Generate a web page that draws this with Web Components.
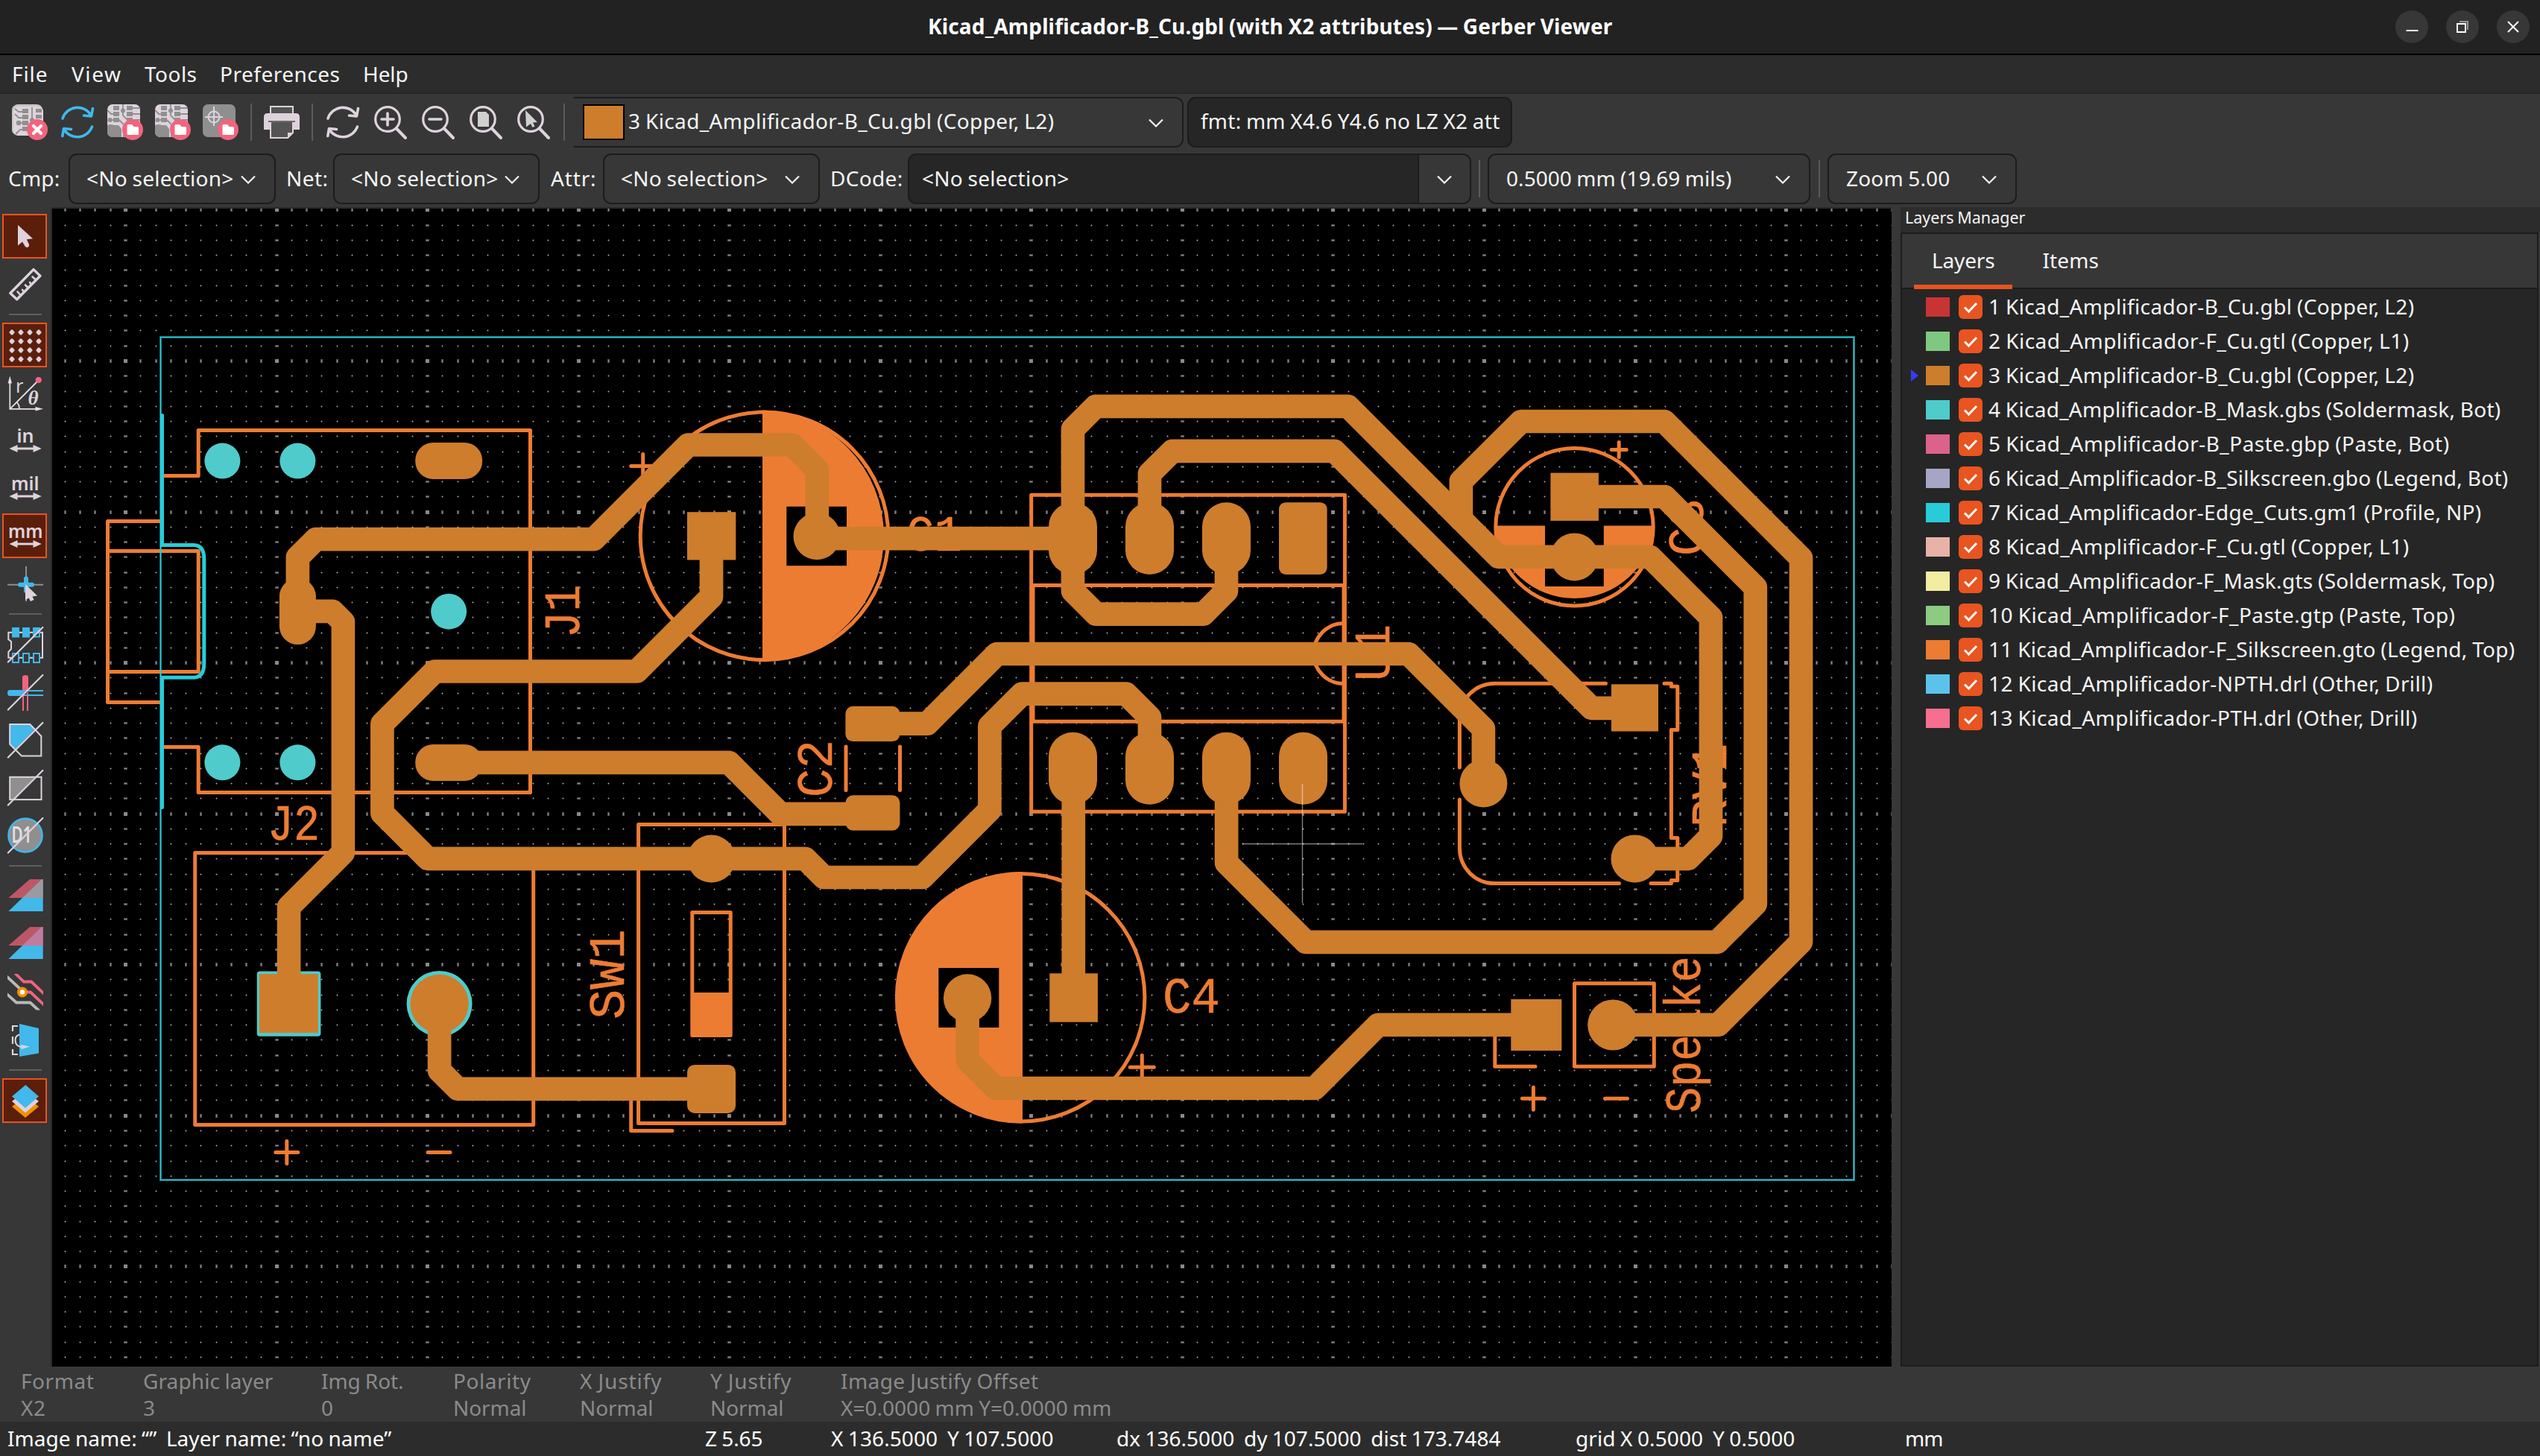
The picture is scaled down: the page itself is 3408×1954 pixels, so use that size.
<!DOCTYPE html>
<html lang="en">
<head>
<meta charset="utf-8">
<title>Gerber Viewer</title>
<style>
  html, body { margin: 0; padding: 0; background: #373737; }
  body { width: 3408px; height: 1954px; overflow: hidden; }
</style>
</head>
<body>
<gerber-app></gerber-app>
<script>
const FG = '#ded3dd', BLUE = '#42b8eb', PINK = '#f2647e', GREY = '#8f8f8f', ORANGE = '#f29100';

/* ---------- icon artwork, all on a 48 x 48 grid ---------- */
const refresh = c => `<g fill="none" stroke="${c}" stroke-width="3.6" stroke-linecap="round" stroke-linejoin="round">
  <path d="M4 19 A21 21 0 0 1 42 14.5"/><path d="M44.5 5.5 L42.5 16 L32.5 15"/>
  <path d="M43.5 30 A21 21 0 0 1 6 34"/><path d="M3.8 42.5 L5.5 32.5 L15.5 33.5"/></g>`;
const badge = inner => `<circle cx="34" cy="34" r="14" fill="${PINK}"/>${inner}`;
const folder = `<path d="M26.5 28.5 q0 -1.5 1.5 -1.5 h5 l2.5 3 h5 q1.5 0 1.5 1.5 v8 q0 1.5 -1.5 1.5 h-12.500 q-1.500 0 -1.500 -1.500z" fill="#fff"/>`;
const pcb = `<clipPath id="pc"><rect width="44" height="44" rx="7"/></clipPath><g clip-path="url(#pc)">
  <rect width="44" height="44" fill="${FG}"/>
  <g fill="${GREY}"><rect x="8" y="2" width="8" height="6"/><rect x="8" y="10" width="8" height="6"/><circle cx="3.500" cy="21" r="3"/><rect x="8" y="18" width="8" height="6"/>
  <rect x="26" y="2" width="8" height="6"/><rect x="26" y="10" width="8" height="6"/><rect x="26" y="18" width="8" height="6"/><circle cx="21" cy="8.500" r="3"/>
  <path d="M0 28 q5 -2 9 0 h6 l4 5 v12 h-19z"/></g>
  <g fill="none" stroke="${GREY}" stroke-width="1.800"><path d="M0 8 l5 5 h4"/><path d="M3 21 h6"/><path d="M21 0 v15 l5 5"/><path d="M34 5 h12 M34 13 h12 M34 21 h12"/><path d="M16 21 l6 6 v18"/></g></g>`;
const zoomGlass = inner => `<g fill="none" stroke="${FG}" stroke-linecap="round"><circle cx="20" cy="20" r="16.300" stroke-width="3.200"/><path d="M32 32.500 L44 45" stroke-width="4"/></g>${inner}`;
const diag = `<path d="M0.800 47.500 L47.300 1" stroke="${FG}" stroke-width="2.200" stroke-linecap="round"/>`;
const dimArrow = `<path d="M12 35 H36" stroke="${FG}" stroke-width="3"/><path d="M2.500 35 L13.500 30 V40Z M45.800 35 L34.500 30 V40Z" fill="${FG}"/>`;
const unit = (t, x, w) => `<text x="${x}" y="27" textLength="${w}" lengthAdjust="spacingAndGlyphs" font-family="'Noto Sans','Open Sans',sans-serif" font-weight="600" font-size="25" fill="${FG}">${t}</text>${dimArrow}`;

const ICONS = {
  clear: `<path d="M3 3 q1 -3 5 -3 h25 q7 0 8 7 v30 h-38z" fill="#c9c6c3"/><path d="M0 8 q0 -7 7 -7 v40 q-7 -1 -7 -7z" fill="#c9c6c3"/>
    <rect x="2" y="3" width="40" height="39" rx="6" fill="${FG}"/>
    <g fill="${GREY}"><rect x="14" y="6" width="8" height="6"/><rect x="14" y="14" width="8" height="6"/><circle cx="9" cy="25" r="3.300"/><rect x="14" y="22" width="8" height="6"/><rect x="14" y="30" width="9" height="6"/>
    <rect x="32" y="6" width="8" height="5"/><rect x="32" y="14" width="8" height="5"/><circle cx="27" cy="21" r="3"/></g>
    <g fill="none" stroke="${GREY}" stroke-width="1.800"><path d="M4 6 l5 4 h6"/><path d="M4 13 l5 5 h6"/><path d="M9 25 h6"/><path d="M5 40 l6 -6 h4"/><path d="M27 4 v20"/></g>
    ${badge(`<path d="M29 29 L39 39 M39 29 L29 39" stroke="#fff" stroke-width="4.200" stroke-linecap="round"/>`)}`,
  reload: refresh(BLUE),
  redraw: refresh(FG),
  gerber: pcb + badge(folder),
  drill: `<rect width="44" height="44" rx="7" fill="${GREY}"/><g fill="none" stroke="${FG}" stroke-width="2"><circle cx="15" cy="17" r="7.500"/><path d="M15 3 V29 M3 17 H27"/></g>${badge(folder)}`,
  print: `<rect x="9" y="3" width="30" height="12" fill="#545454" stroke="${FG}" stroke-width="2"/>
    <path d="M0 17 q0 -5 5 -5 h38 q5 0 5 5 v17 h-48z" fill="${FG}"/><rect x="6" y="22" width="36" height="2" fill="#6b6b6b"/>
    <path d="M9 24 H39 V40 L33 45 H9Z" fill="#545454"/><path d="M9 24 V45 H32 L39 38 V24" fill="none" stroke="${FG}" stroke-width="2"/><path d="M32 46 V38 H40Z" fill="${FG}"/>`,
  zin: zoomGlass(`<path d="M12 20 H28 M20 12 V28" stroke="${FG}" stroke-width="3.600" stroke-linecap="round"/>`),
  zout: zoomGlass(`<path d="M12 20 H28" stroke="${FG}" stroke-width="3.600" stroke-linecap="round"/>`),
  zfit: zoomGlass(`<path d="M13 10 H24 L28 14 V30 H13Z" fill="#d0d0d0"/>`),
  zsel: zoomGlass(`<path d="M13 8 L29 24 L23 24.500 L25.500 29.500 L22.500 31 L20 26 L14 30.500Z" fill="#d0d0d0"/>`),
  cursor: `<path d="M14 9 L34 27.300 L25.800 28.300 L29 35 Q29.500 38.500 26.500 39 Q24.300 39.200 23.300 37 L20 31.500 L14 36.500Z" fill="${FG}"/>`,
  ruler: `<path d="M3.800 36.500 L35 4.600 L43.900 13.300 L12.700 44.800Z" fill="none" stroke="${FG}" stroke-width="3.400" stroke-linejoin="round"/><path d="M17.500 39 L13.500 34.500 M22 34.500 L20 32 M27.500 29 L24 25.500 M32 24.500 L30 22 M38 18.500 L33.500 14.500" stroke="${FG}" stroke-width="2.600" stroke-linecap="round"/>`,
  grid: [7, 19, 31, 43].map(y => [6, 18, 30, 42].map(x => `<path d="M${x - 3.800} ${y} L${x - 1} ${y - 3.600} H${x + 1} L${x + 3.800} ${y} L${x + 1} ${y + 3.600} H${x - 1}Z" fill="${FG}"/>`).join('')).join(''),
  polar: `<g fill="none" stroke="#e6dfe5" stroke-width="1.800"><path d="M3.300 8 V45.800 H42"/><path d="M3.300 45.800 L41 8"/><path d="M13 37 Q16 41 16 45"/></g>
    <path d="M3.300 1.500 L6 11.500 H0.600Z M48 45.800 L37.500 43 V48.600Z" fill="#e6dfe5"/><circle cx="41.700" cy="7" r="4.100" fill="${PINK}"/>
    <text x="11" y="23.500" font-family="'Noto Sans','Open Sans',sans-serif" font-size="25" fill="${FG}">r</text>
    <text x="27.500" y="40.300" font-family="'Liberation Serif','Noto Sans',serif" font-style="italic" font-weight="700" font-size="27" fill="${FG}">θ</text>`,
  inch: unit('in', 12.500, 23), mil: unit('mil', 5, 37.500), mm: unit('mm', 1, 46.500),
  origin: `<path d="M0 25.700 H48 M25 1 V48" stroke="${GREY}" stroke-width="2"/><path d="M17 25.700 H33 M25 17.500 V34" stroke="${BLUE}" stroke-width="6" stroke-linecap="round"/>
    <path d="M24 25 L40 40.500 L33.500 41.500 L35.500 46 L31 48 L28.500 43.500 L24 46.500Z" fill="${FG}"/>`,
  pads: `<path d="M1.300 7.800 H47 V41.700 H1.300 V34 L5 30 V20 L1.300 17Z" fill="none" stroke="${FG}" stroke-width="2"/>
    <g fill="${BLUE}"><rect x="6" y="1" width="10" height="13.500"/><rect x="20" y="1" width="10" height="13.500"/><path d="M34 1 H44 V4.500 L34 14Z"/></g>
    <g fill="#373737" stroke="${BLUE}" stroke-width="2"><rect x="7" y="36" width="8" height="12"/><rect x="21" y="36" width="8" height="12"/><rect x="35" y="36" width="8" height="12"/></g><path d="M35 13.500 H43 V5" fill="none" stroke="${BLUE}" stroke-width="2"/>${diag}`,
  lines: `<path d="M20 28 V4 q0 -3 4 -3 q4 0 4 3 V21 L20 29Z" fill="${PINK}"/><path d="M21 24 V49 M27 24 V49" stroke="${PINK}" stroke-width="2"/>
    <path d="M24 21 H3 q-3 0 -3 4 q0 4 3 4 H18Z" fill="${BLUE}"/><path d="M22 22 H48 M22 28 H48" stroke="${BLUE}" stroke-width="2"/>${diag}`,
  poly: `<path d="M2.700 2.800 H30.300 L37.500 9 L10 37 L2.700 29.800Z" fill="${BLUE}"/><path d="M3.200 3 H30.300 L45.300 19 V45.500 H19 L3.200 29.800Z" fill="none" stroke="${FG}" stroke-width="2"/>${diag}`,
  neg: `<path d="M3.500 9.500 H37 L8 40 H3.500Z" fill="${GREY}"/><rect x="3.200" y="9.800" width="42.300" height="30.300" fill="none" stroke="${FG}" stroke-width="2"/>${diag}`,
  dcode: `<circle cx="24" cy="24" r="22.500" fill="${GREY}" stroke="${BLUE}" stroke-width="2.600"/><text x="5.500" y="33.500" textLength="27" lengthAdjust="spacingAndGlyphs" font-family="'Noto Sans','Open Sans',sans-serif" font-weight="600" font-size="31" fill="#e3dfe2">D1</text>${diag}`,
  diff: `<path d="M1.300 26 L30 1 H47.700 V26Z" fill="#bd5767"/><path d="M20 26 L46 1 H47.700 V26Z" fill="#999ba0"/><path d="M1.300 44 L20 26 H47.700 V44Z" fill="${BLUE}"/>`,
  xor: `<path d="M1.300 26 L30 1 H47.700 V26Z" fill="#bd5767"/><path d="M20 26 L46 1 H47.700 V26Z" fill="#c07c9f"/><path d="M1.300 44 L20 26 H47.700 V44Z" fill="${BLUE}"/>`,
  tracks: `<clipPath id="tc"><rect width="48" height="48.500"/></clipPath><g clip-path="url(#tc)" fill="none" stroke-width="3.800"><path d="M-2 2.500 L18 21" stroke="#b9b9b9"/><path d="M-2 26 L12 38.500 H30.500 L43 50" stroke="#b9b9b9"/>
    <path d="M10 -1 L22 10.500 H32 L50 27.500" stroke="${PINK}"/><path d="M24 24.500 H31 L50 42.500" stroke="${PINK}"/></g><circle cx="20" cy="24.500" r="7" fill="${ORANGE}"/><circle cx="20" cy="24.500" r="3.200" fill="#fff"/>`,
  flip: `<path d="M16 3 L42 9 V42.500 L16 47Z" fill="${BLUE}"/><path d="M14 6 H7 V13 M7 20 V30 M7 37 V44 H14" fill="none" stroke="${FG}" stroke-width="2.200"/>
    <path d="M16 17.500 Q10.500 19 10.500 25 Q10.500 33 19 34" fill="none" stroke="${FG}" stroke-width="2"/><path d="M18.500 31 L30 33.500 L18.500 37.300Z" fill="${FG}"/>`,
  layers: `<path d="M6 32 L24.300 18 L42 32 L24 47Z" fill="${ORANGE}"/><path d="M6 25 L24.300 11 L42 25 L24 40.500Z" fill="${FG}"/><path d="M6 18.400 L24.300 2.900 L42 18.400 L24 34Z" fill="${BLUE}"/>`
};

class Base extends HTMLElement {
  constructor() { super(); this.attachShadow({ mode: 'open' }); }
  connectedCallback() {
    this.shadowRoot.innerHTML = `<style>*{box-sizing:border-box}${this.css()}</style>${this.html()}`;
    if (this.after) this.after();
  }
  css() { return ''; }
  html() { return '<slot></slot>'; }
  a(n, d = '') { return this.getAttribute(n) ?? d; }
}

/* A single line of text tracked to occupy exactly `w` pixels. */
customElements.define('ui-text', class extends Base {
  css() { return `:host{display:block;flex:none;white-space:pre;width:${this.a('w')}px;line-height:1.2}span{display:inline-block;margin-left:1px;word-spacing:-1px}`; }
  html() { return `<span>${this.a('t').replace(/</g, '&lt;')}</span>`; }
  after() {
    const s = this.shadowRoot.querySelector('span');
    const n = [...this.a('t')].length;
    s.style.letterSpacing = ((+this.a('w') - 1.5 - s.getBoundingClientRect().width) / n).toFixed(3) + 'px';
  }
});
const T = (t, w, gap = 0) => `<ui-text t="${t.replace(/"/g, '&quot;')}" w="${w}" style="margin-left:${gap}px"></ui-text>`;

customElements.define('ui-icon', class extends Base {
  css() { return ':host{display:block;flex:none;width:48px;height:48px}svg{display:block;overflow:visible}'; }
  html() { return `<svg width="48" height="48" viewBox="0 0 48 48">${ICONS[this.a('name')]}</svg>`; }
});
customElements.define('ui-sep', class extends Base {
  css() { return ':host{display:block;flex:none;width:2px;height:50px;background:#5b5b5b}'; }
});
customElements.define('ui-combo', class extends Base {
  css() {
    return `:host{display:flex;flex:none;align-items:center;height:68px;width:${this.a('w')}px;border:2px solid #1c1c1c;border-radius:11px;background:#373737;overflow:hidden}
    :host([entry]),:host([field]){background:#262626}
    :host([open]){border-left-color:transparent;border-radius:4px 11px 11px 4px}
    .mid{flex:1 1 0;min-width:0;display:flex;align-items:center;height:100%}
    .arrow{width:70px;height:100%;display:flex;align-items:center;justify-content:center;flex:none;padding-top:1px}
    :host([entry]) .arrow{background:#373737;border-left:2px solid #1c1c1c}
    :host([field]) .arrow{display:none}svg{display:block}`;
  }
  html() { return `<div class="mid"><slot></slot></div><div class="arrow"><svg width="24" height="14" viewBox="0 0 24 14"><path d="M3 2.500 L12 11.500 L21 2.500" fill="none" stroke="#f2f2f2" stroke-width="2.200"/></svg></div>`; }
});
customElements.define('tool-button', class extends Base {
  css() {
    return `:host{display:flex;flex:none;width:60px;height:60px;align-items:center;justify-content:center;padding-left:2px;border:2px solid transparent}
    :host([on]){background:#5b1e0b;border-color:#e95420}`;
  }
  html() { return `<ui-icon name="${this.a('icon')}"></ui-icon>`; }
});

customElements.define('title-bar', class extends Base {
  css() {
    return `:host{display:flex;height:74px;background:#222;border-bottom:2px solid #000;align-items:center;color:#fff;font-weight:700}
    .side{flex:1;display:flex;justify-content:flex-end;gap:24px;padding-right:14px}
    i{display:block;width:44px;height:44px;border-radius:50%;background:#373737}`;
  }
  html() {
    const b = d => `<i><svg width="44" height="44" viewBox="0 0 44 44" fill="none" stroke="#fff" stroke-width="2">${d}</svg></i>`;
    return `<div class="side"></div>${T('Kicad_Amplificador-B_Cu.gbl (with X2 attributes) — Gerber Viewer', 920)}<div class="side">
      ${b('<path d="M14.500 27 H30.500"/>')}${b('<path d="M18 15 H29 V26" stroke="#999"/><rect x="15" y="18" width="11" height="11"/>')}${b('<path d="M15 15 L29 29 M29 15 L15 29"/>')}</div>`;
  }
});
customElements.define('menu-bar', class extends Base {
  css() { return ':host{display:flex;height:52px;background:#2c2c2c;border-bottom:2px solid #272727;align-items:center;padding:2px 0 0 15px;box-sizing:border-box}'; }
  html() { return T('File', 50) + T('View', 69, 30) + T('Tools', 72, 29) + T('Preferences', 163, 29) + T('Help', 62, 29); }
});
customElements.define('main-toolbar', class extends Base {
  css() {
    return `:host{display:flex;height:76px;padding:4px 0 4px 16px;align-items:center;box-sizing:border-box}
    .g{display:flex;gap:16px}.sw{width:56px;height:48px;background:#ce7d2c;border:2px solid #000;flex:none;margin-left:12px}
    ui-text{padding-bottom:2px}`;
  }
  html() {
    const g = a => `<div class="g">${a.map(n => `<ui-icon name="${n}"></ui-icon>`).join('')}</div>`;
    const sep = (l, r) => `<ui-sep style="margin:0 ${r}px 0 ${l}px"></ui-sep>`;
    return g(['clear', 'reload', 'gerber', 'gerber', 'drill']) + sep(16, 16) + g(['print']) + sep(16, 16) +
      g(['redraw', 'zin', 'zout', 'zfit', 'zsel']) + sep(16, 10) +
      `<ui-combo w="820" open><div class="sw"></div>${T('3 Kicad_Amplificador-B_Cu.gbl (Copper, L2)', 573, 4)}</ui-combo>
       <ui-combo w="436" field style="margin-left:5px">${T('fmt: mm X4.6 Y4.6 no LZ X2 att', 403, 15)}</ui-combo>`;
  }
});
customElements.define('filter-toolbar', class extends Base {
  css() { return ':host{display:flex;height:76px;padding:0 0 0 10px;align-items:center;box-sizing:border-box}'; }
  html() {
    const c = (w, t, tw, g = 13, x = 21, extra = '') => `<ui-combo w="${w}" ${extra} style="margin-left:${g}px">${T(t, tw, x)}</ui-combo>`;
    const l = (t, w, g) => `<div class="l">${T(t, w, g)}</div>`;
    const N = '<No selection>';
    return l('Cmp:', 71, 0) + c(278, N, 199, 11) + l('Net:', 58, 13) + c(277, N, 199, 6) + l('Attr:', 63, 14) + c(291, N, 199, 8) +
      l('DCode:', 99, 13) + c(756, N, 199, 6, 16, 'entry') + `<ui-sep style="margin:0 10px 0 10px"></ui-sep>` +
      c(433, '0.5000 mm (19.69 mils)', 304, 0, 22) + `<ui-sep style="margin:0 10px 0 11px"></ui-sep>` + c(254, 'Zoom 5.00', 141, 0, 22);
  }
});
customElements.define('side-toolbar', class extends Base {
  css() { return ':host{display:flex;flex-direction:column;gap:4px;width:68px;flex:none;padding:9px 0 0 3px;box-sizing:border-box}hr{margin:6px 0 6px 9px;border:0;width:44px;height:2px;background:#5f5f5f;flex:none}'; }
  html() {
    return ['cursor*', 'ruler', '-', 'grid*', 'polar', 'inch', 'mil', 'mm*', 'origin', '-', 'pads', 'lines', 'poly', 'neg', 'dcode', '-', 'diff', 'xor', 'tracks', 'flip', '-', 'layers*']
      .map(n => n === '-' ? '<hr>' : `<tool-button icon="${n.replace('*', '')}" ${n.endsWith('*') ? 'on' : ''}></tool-button>`).join('');
  }
});

/* Board drawing; coordinates are window pixels, offset by the view box. */
customElements.define('board-canvas', class extends Base {
  css() { return ':host{display:block;flex:none;width:2470px;height:1556px;border:2px solid #2a2a2a;border-width:2px 0 0 2px;background:#000;box-sizing:border-box}svg{display:block}'; }
  grid() {
    let dim = '', core = '', bold = '';
    const P = 20.255;
    for (let j = -10; j < 68; j++) for (let i = -5; i < 118; i++) {
      const x = Math.round(168 + i * P), y = Math.round(484 + j * P);
      const bx = i % 10 === 0, by = j % 10 === 0;
      if (bx && by) bold += `M${x - 2} ${y - 2}h5v5h-5z`;
      else if (bx) { bold += `M${x - 1} ${y}h3v1h-3z`; dim += `M${x - 2} ${y - 1}h5v3h-5z`; }
      else if (by) { bold += `M${x} ${y - 1}h1v3h-1z`; dim += `M${x - 1} ${y - 2}h3v5h-3z`; }
      else { dim += `M${x} ${y - 1}h1v3h-1zM${x - 1} ${y}h3v1h-3z`; core += `M${x} ${y}h1v1h-1z`; }
    }
    return `<g shape-rendering="crispEdges"><path d="${dim}" fill="#525252"/><path d="${core}" fill="#a8a8a8"/><path d="${bold}" fill="#8a8a8a"/></g>`;
  }
  html() {
    const txt = (t, x, y, len, rot) => `<text transform="translate(${x} ${y})${rot ? ' rotate(-90)' : ''}" textLength="${len}" lengthAdjust="spacingAndGlyphs">${t}</text>`;
    const plus = (x, y, h) => `M${x - h} ${y}H${x + h}M${x} ${y - h}V${y + h}`;
    const oval = (x, y, w, h, r) => `<rect x="${x}" y="${y}" width="${w}" height="${h}" rx="${r}"/>`;
    const dot = (x, y, r) => `<circle cx="${x}" cy="${y}" r="${r}"/>`;
    return `<svg width="2468" height="1554" viewBox="70 280 2468 1554">${this.grid()}
    <g fill="none" stroke="#ed7c33" stroke-width="5" stroke-linecap="round" stroke-linejoin="round">
      <path d="M218 638.600H266.200V577.400H711.500V1063.600H266.200V1002.400H218"/>
      <path d="M217 699.500H144.500V942.600H217M144.500 739.600H266.200V901.400H144.500"/>
      <path d="M261.700 1144.600H715.700V1509.600H261.700Z"/>
      <path d="M856.600 1106.400H1052.500V1507.500H856.600ZM846.700 1470V1517.500H902M928.800 1224.600H980.200V1389.500H928.800Z"/>
      <path d="M1383.700 664.200H1804.400V1089.200H1383.700ZM1386 785.600H1803V968.200H1386ZM1803 836.500A40.500 40.500 0 0 0 1803 917.500"/>
      <path d="M1135 1002V1060.500M1207.500 1002V1060.500"/>
      <path d="M2154.500 917.200H2005A47 47 0 0 0 1958.400 964V1030M1958.400 1073V1138.600A47 47 0 0 0 2005 1185.600H2172.500M2233 917.200H2242.400V921.300H2250.800V979.500H2242.400V1124.400H2250.800V1181.500H2242.400V1185.600H2215"/>
      <path d="M2112.500 1319.700H2219.300V1431.300H2112.500ZM2005.800 1385V1431.300H2060"/>
      <circle cx="1025.500" cy="719.300" r="166.300"/><circle cx="1369.600" cy="1338.800" r="166.300"/><circle cx="2112.500" cy="707.300" r="105.700"/>
      <path d="${plus(862.7, 625.6, 16)}${plus(1532.3, 1432.3, 16)}${plus(2172.2, 603.5, 10)}${plus(384.8, 1546.4, 15)}${plus(2057.4, 1474.3, 15)}M574 1546.400H604M2153.500 1474.300H2183.500"/>
    </g>
    <g fill="#ed7c33">
      <rect x="928" y="1332" width="53" height="58"/>
      <path d="M1023 550.600A168.800 168.800 0 0 1 1023 888Z M1372 1170A168.800 168.800 0 0 0 1372 1507.600Z M2005 705.500A108 108 0 0 0 2220 705.500Z"/>
    </g>
    <g fill="#000"><rect x="1055.300" y="679.800" width="80.700" height="79.400"/><rect x="1259.300" y="1299" width="81" height="80"/><rect x="2073" y="705" width="78.800" height="82"/></g>
    <g fill="#ed7c33" stroke="#ed7c33" stroke-width=".6" font-family="'Liberation Mono',monospace" font-size="68">
      ${txt('J1', 777, 856, 71, 1)}${txt('C2', 1116, 1070, 77, 1)}${txt('SW1', 836.5, 1368, 121, 1)}${txt('J2', 359, 1127, 70)}
      ${txt('C1', 1216, 738.5, 75)}${txt('U1', 1863.5, 914, 76, 1)}${txt('C3', 2285, 746, 77, 1)}${txt('RV1', 2315.5, 1110, 112, 1)}${txt('C4', 1560, 1359, 77)}${txt('Speaker', 2281, 1494, 246, 1)}
    </g>
    <rect x="215.500" y="452.500" width="2272" height="1131" fill="none" stroke="#28ccd9" stroke-opacity=".6" stroke-width="3"/>
    <rect x="215.500" y="452.500" width="2272" height="1131" fill="none" stroke="#28ccd9" stroke-width="1"/>
    <path d="M217.500 557.500V731.600H260Q273.800 732 273.800 750V890Q273.800 909 260 909.200H217.500V1083.500" fill="none" stroke="#28ccd9" stroke-width="5" stroke-linecap="round"/>
    <g fill="#4fcbcb">${dot(298.4, 618.6, 24)}${dot(399.4, 618.6, 24)}${dot(602.1, 820.7, 24)}${dot(298.4, 1023.3, 24)}${dot(399.4, 1023.3, 24)}
      ${oval(344.7, 1303.4, 85.7, 87.4, 4)}${dot(589.6, 1347, 44)}</g>
    <g fill="none" stroke="#ce7d2c" stroke-width="31.700" stroke-linecap="round" stroke-linejoin="round">
      <path d="M399.400 820V748L423.800 723.600H796.800L923.400 597H1063L1096.300 630V719.700"/>
      <path d="M1096 722.700H1439.500"/>
      <path d="M399.400 820.300H446L460.400 834.700V1144.300L387.600 1217V1340"/>
      <path d="M954.500 720V800.800L854.300 901H583.300L512.900 971.400V1091.300L574 1152.400H1080.500L1105.600 1177.500H1237.500L1327.900 1087V974.500L1371.200 931.200H1511L1542.500 962.700V1031"/>
      <path d="M602 1023.300H978L1047 1092.300H1170"/>
      <path d="M589.600 1347V1436.800L614.200 1461.400H954"/>
      <path d="M1439.500 722V576L1470 545.400H1808.700L2010.600 747.300H2214L2295.500 828.800V1122L2265.200 1152.400H2193.500"/>
      <path d="M1960.400 697V645.800L2041 565.500H2233L2416.500 749V1264L2305.500 1375.300H2164"/>
      <path d="M2112.500 666.500H2233.500L2355.300 788.300V1213L2304 1264.300H1752L1645.600 1158V1031"/>
      <path d="M1542.500 722V635.800L1573 605.400H1790.500L2135.500 950.400H2193"/>
      <path d="M1439.500 722V793L1470.700 824.200H1614.300L1645.500 793V722"/>
      <path d="M1170 971.200H1244L1337.700 877.500H1890L1990.400 977.900V1051"/>
      <path d="M1440.300 1031V1339"/>
      <path d="M1298.100 1339.500V1422.600L1336 1460.500H1764L1849.200 1375.300H2061"/>
    </g>
    <g fill="#ce7d2c">
      ${oval(557.2, 594, 90, 49, 24)}${oval(557.2, 999, 90, 49, 24)}${oval(374.9, 776, 49, 89, 24.5)}
      ${dot(1096, 719.7, 31.5)}${oval(922, 687.2, 65.3, 64.3, 0)}
      ${[1439.5, 1542.5, 1645.5].map(x => oval(x - 32.5, 674.2, 65, 96.700, 32.5)).join('')}${oval(1716, 674.2, 64.600, 96.700, 9)}
      ${[1439.5, 1542.5, 1645.5, 1748.5].map(x => oval(x - 32.5, 982.7, 65, 97, 32.5)).join('')}
      ${oval(1134.4, 947.8, 73, 47.3, 10)}${oval(1134.4, 1067.2, 73, 47.3, 10)}
      ${oval(347.8, 1307.1, 79, 79, 0)}${dot(589.6, 1347, 39.2)}
      ${dot(954.5, 1152.5, 32)}${oval(922, 1428.9, 65, 65, 10)}
      ${dot(1298.1, 1339.5, 32.2)}${oval(1408.3, 1306.3, 64.6, 65.4, 0)}
      ${oval(2080.4, 634.6, 64.5, 64.3, 0)}${dot(2112.5, 747.4, 32)}
      ${oval(2162, 918.3, 63, 63.2, 0)}${dot(1990.4, 1051.4, 32)}${dot(2193.5, 1152.4, 32)}
      ${oval(2027.3, 1341, 68, 69, 0)}${dot(2164.2, 1375.5, 34)}
    </g>
    <path d="M1747.500 1052V1212M1667 1132.500H1828" stroke="#fff" stroke-opacity=".5" stroke-width="1.400"/>
    </svg>`;
  }
});

customElements.define('layer-row', class extends Base {
  css() {
    return `:host{display:flex;height:46px;align-items:center;padding-left:12px}
    .m{width:10px;height:16px;flex:none}:host([active]) .m{background:#3a3af5;clip-path:polygon(0 0,100% 50%,0 100%)}
    .s{width:32px;height:26px;margin-left:10px;background:${this.a('color')};flex:none}
    .c{width:32px;height:32px;border-radius:6px;background:#e95420;margin:0 7px 0 12px;flex:none}.c svg{display:block}
    ui-text{padding-bottom:1px}`;
  }
  html() { return `<div class="m"></div><div class="s"></div><div class="c"><svg width="32" height="32"><path d="M8 16.500 L13.500 22 L24 11" fill="none" stroke="#fff" stroke-width="3"/></svg></div>${T(this.a('name'), this.a('tw'))}`; }
});
customElements.define('layers-panel', class extends Base {
  css() {
    return `:host{display:flex;flex-direction:column;width:858px;height:1556px;margin-left:12px;flex:none;background:#373737}
    .h{height:34px;background:#2c2c2c;display:flex;align-items:center;padding:0 0 6px 5px;font-size:21.500px}
    .b{flex:1;border:2px solid #1c1c1c;margin-right:2px;background:#262626;display:flex;flex-direction:column;min-height:0}
    .t{height:74px;background:#373737;border-bottom:2px solid #1c1c1c;display:flex;padding-left:16px}
    .t div{width:132px;height:74px;display:flex;align-items:center;justify-content:center;padding-bottom:2px}
    .t .on{border-bottom:6px solid #e95420;padding:4px 0 0 0}
    .l{padding-top:1px}`;
  }
  html() {
    const rows = [['c83434', '1 Kicad_Amplificador-B_Cu.gbl (Copper, L2)', 573], ['7fc87f', '2 Kicad_Amplificador-F_Cu.gtl (Copper, L1)', 566], ['ce7d2c', '3 Kicad_Amplificador-B_Cu.gbl (Copper, L2)', 573],
      ['4fcbcb', '4 Kicad_Amplificador-B_Mask.gbs (Soldermask, Bot)', 689], ['db628b', '5 Kicad_Amplificador-B_Paste.gbp (Paste, Bot)', 620], ['a7a5c6', '6 Kicad_Amplificador-B_Silkscreen.gbo (Legend, Bot)', 699],
      ['28ccd9', '7 Kicad_Amplificador-Edge_Cuts.gm1 (Profile, NP)', 663], ['e8b2a7', '8 Kicad_Amplificador-F_Cu.gtl (Copper, L1)', 566], ['f2eda1', '9 Kicad_Amplificador-F_Mask.gts (Soldermask, Top)', 681],
      ['8dcb81', '10 Kicad_Amplificador-F_Paste.gtp (Paste, Top)', 628], ['ed7c33', '11 Kicad_Amplificador-F_Silkscreen.gto (Legend, Top)', 708], ['5bc3eb', '12 Kicad_Amplificador-NPTH.drl (Other, Drill)', 598], ['f76f8e', '13 Kicad_Amplificador-PTH.drl (Other, Drill)', 577]];
    return `<div class="h">${T('Layers Manager', 163)}</div><div class="b"><div class="t"><div class="on">${T('Layers', 86)}</div><div style="margin-left:12px">${T('Items', 77)}</div></div>
      <div class="l">${rows.map((r, i) => `<layer-row color="#${r[0]}" name="${r[1]}" tw="${r[2]}" ${i === 2 ? 'active' : ''}></layer-row>`).join('')}</div></div>`;
  }
});
customElements.define('info-panel', class extends Base {
  css() { return ':host{display:flex;height:74px;background:#373737;color:#8b8b8b;padding:1px 0 0 27px;box-sizing:border-box}.c{display:flex;flex-direction:column;flex:none}ui-text{line-height:36px}'; }
  html() {
    const c = (w, a, aw, b, bw) => `<div class="c" style="width:${w}px">${T(a, aw)}${T(b, bw)}</div>`;
    return c(164, 'Format', 100, 'X2', 35) + c(239, 'Graphic layer', 176, '3', 17.5) + c(177, 'Img Rot.', 112, '0', 17.5) + c(170, 'Polarity', 106, 'Normal', 100) +
      c(175, 'X Justify', 112, 'Normal', 100) + c(175, 'Y Justify', 111, 'Normal', 100) + c(500, 'Image Justify Offset', 267, 'X=0.0000 mm Y=0.0000 mm', 365);
  }
});
customElements.define('status-bar', class extends Base {
  css() { return ':host{display:flex;height:46px;background:#2c2c2c;padding:0 0 0 9px;align-items:center;color:#fff;box-sizing:border-box}'; }
  html() {
    return T('Image name: “”  Layer name: “no name”', 517) + T('Z 5.65', 79, 419) + T('X 136.5000  Y 107.5000', 300, 90) + T('dx 136.5000  dy 107.5000  dist 173.7484', 517, 83) +
      T('grid X 0.5000  Y 0.5000', 296, 99) + T('mm', 52, 146);
  }
});
customElements.define('gerber-app', class extends Base {
  css() {
    return `:host{display:flex;flex-direction:column;width:3408px;height:1954px;background:#373737;color:#f5f5f5;font:28px "Noto Sans","Open Sans",sans-serif}
    title-bar{box-sizing:border-box}.main{display:flex;height:1556px;flex:none}`;
  }
  html() {
    return `<title-bar></title-bar><menu-bar></menu-bar><main-toolbar></main-toolbar><filter-toolbar></filter-toolbar>
      <div class="main"><side-toolbar></side-toolbar><board-canvas></board-canvas><layers-panel></layers-panel></div>
      <info-panel></info-panel><status-bar></status-bar>`;
  }
});
</script>
</body>
</html>
